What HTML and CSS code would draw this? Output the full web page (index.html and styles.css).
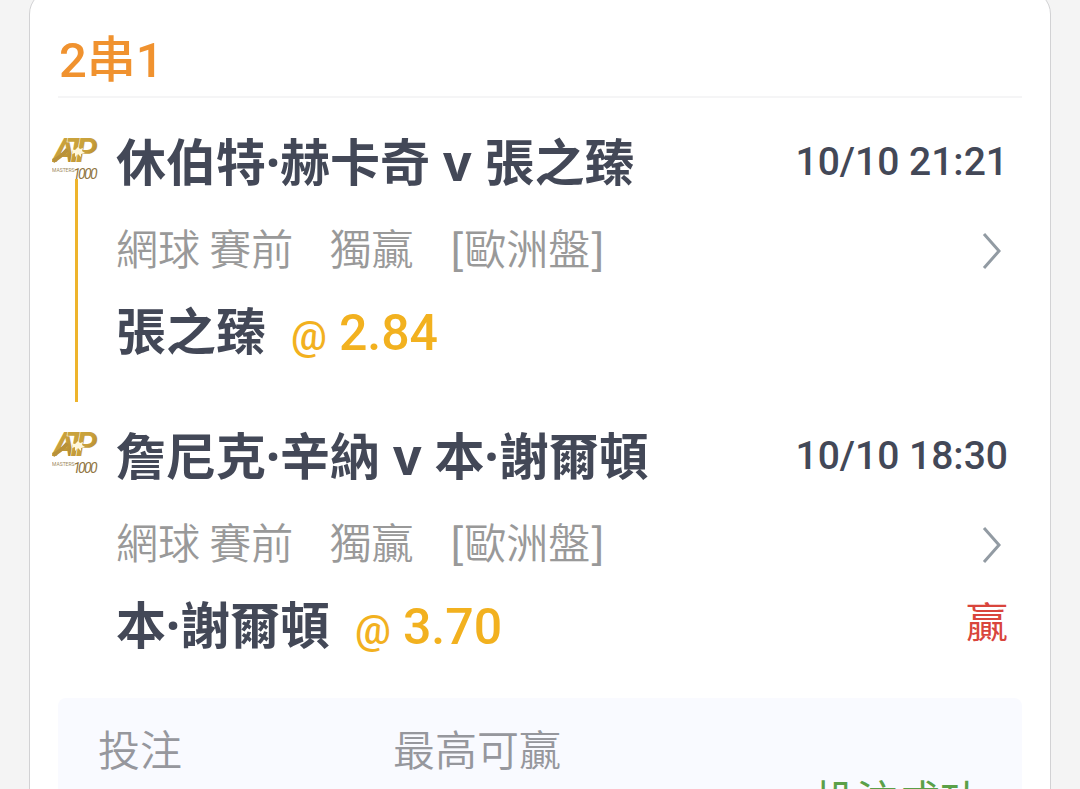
FILE: index.html
```html
<!DOCTYPE html>
<html lang="zh-Hant">

<head>
    <meta charset="UTF-8">
    <meta name="viewport" content="width=device-width, initial-scale=1.0">
    <title>2串1</title>
    <link rel="stylesheet" href="styles.css">
</head>

<body>
    <svg class="defs" width="0" height="0" aria-hidden="true">
        <defs>
            <linearGradient id="gold" x1="0" y1="0" x2="1" y2="1">
                <stop offset="0" stop-color="#c9a63c" />
                <stop offset="0.5" stop-color="#c9a03c" />
                <stop offset="1" stop-color="#a47c2a" />
            </linearGradient>
            <symbol id="atp" viewBox="0 0 46 48">
                <text class="atp-name" x="1" y="27" fill="url(#gold)">A</text>
                <text class="atp-name" x="13" y="27" fill="url(#gold)">T</text>
                <text class="atp-name" x="24" y="27" fill="url(#gold)">P</text>
                <path d="M0 24 C5 22 10 18 14 13 L17 16 C12 21 7 25 2 28 Z" fill="#b8913a" />
                <path d="M19 14 L23 15 L26 12 L28 14 L31 13 L30 16 L33 18 L29 19 L29 22 L26 19 L23 22 L23 18 L20 19 L21 16 Z" fill="#fff8dc" />
                <text class="atp-masters" x="0" y="37">MASTERS</text>
                <text class="atp-number" y="44"><tspan x="21">1</tspan><tspan x="26">0</tspan><tspan x="32">0</tspan><tspan x="38">0</tspan></text>
            </symbol>
        </defs>
    </svg>

    <main class="bet-card">
        <h1 class="bet-type">2串1</h1>

        <section class="leg">
            <div class="leg-side">
                <svg class="leg-logo" role="img" aria-label="ATP Masters 1000"><use href="#atp" /></svg>
                <div class="leg-line"></div>
            </div>
            <div class="leg-body">
                <div class="row">
                    <h2 class="match">休伯特·赫卡奇 v 張之臻</h2>
                    <time class="match-time">10/10 21:21</time>
                </div>
                <div class="row row-market">
                    <p class="market"><span>網球 賽前</span><span>獨贏</span><span><b>[</b>歐洲盤<b>]</b></span></p>
                    <button class="more" type="button" aria-label="詳情">
                        <svg viewBox="0 0 20 38" width="20" height="38">
                            <path d="M2 2 L17 19 L2 36" />
                        </svg>
                    </button>
                </div>
                <div class="row">
                    <p class="pick">張之臻 <span class="odds"><span class="at">@</span>2.84</span></p>
                </div>
            </div>
        </section>

        <section class="leg">
            <div class="leg-side">
                <svg class="leg-logo" role="img" aria-label="ATP Masters 1000"><use href="#atp" /></svg>
            </div>
            <div class="leg-body">
                <div class="row">
                    <h2 class="match">詹尼克·辛納 v 本·謝爾頓</h2>
                    <time class="match-time">10/10 18:30</time>
                </div>
                <div class="row row-market">
                    <p class="market"><span>網球 賽前</span><span>獨贏</span><span><b>[</b>歐洲盤<b>]</b></span></p>
                    <button class="more" type="button" aria-label="詳情">
                        <svg viewBox="0 0 20 38" width="20" height="38">
                            <path d="M2 2 L17 19 L2 36" />
                        </svg>
                    </button>
                </div>
                <div class="row">
                    <p class="pick">本·謝爾頓 <span class="odds"><span class="at">@</span>3.70</span></p>
                    <span class="result">贏</span>
                </div>
            </div>
        </section>

        <section class="summary">
            <span class="summary-label">投注</span>
            <span class="summary-label">最高可贏</span>
            <span class="summary-status">投注成功</span>
        </section>
    </main>
</body>

</html>
```
FILE: styles.css
```css
* {
    box-sizing: border-box;
}

body {
    margin: 0;
    height: 100vh;
    overflow: hidden;
    background-color: #f4f4f4;
    color: #434857;
    font-family: Roboto, "Noto Sans CJK TC", sans-serif;
}

h1,
h2,
p {
    margin: 0;
}

.defs {
    position: absolute;
}

.bet-card {
    margin: -10px 29px 0;
    padding: 40px 0 28px;
    background-color: #fff;
    border: 1px solid #d2d2d4;
    border-radius: 24px;
}

.bet-type {
    margin: 0 28px 34px;
    padding: 0 1px 5px;
    border-bottom: 2px solid #f5f5f6;
    color: #f0922f;
    font-size: 49px;
    font-weight: 500;
    line-height: 60px;
}

.leg {
    display: flex;
    padding: 0 42px 0 22px;
    margin-bottom: 62px;
}

.leg:nth-of-type(2) {
    margin-bottom: 40px;
}

.leg-side {
    display: flex;
    flex-direction: column;
    align-items: center;
    width: 46px;
    margin-right: 18px;
}

.leg-logo {
    width: 46px;
    height: 54px;
}

.leg-line {
    flex: 1;
    width: 3px;
    margin: -7px 0 -38px 2px;
    background-color: #eeb42c;
}

.atp-name {
    font-family: Roboto, sans-serif;
    font-size: 34px;
    font-style: italic;
    font-weight: bold;
    stroke: #fff;
    stroke-width: 1px;
    paint-order: stroke;
}

.atp-masters {
    fill: #a08a5c;
    font-family: Roboto, sans-serif;
    font-size: 5px;
}

.atp-number {
    fill: #8f7440;
    font-family: Roboto, sans-serif;
    font-size: 14px;
    font-style: italic;
}

.leg-body {
    flex: 1;
    display: grid;
    gap: 26px;
}

.row {
    display: flex;
    align-items: center;
    justify-content: space-between;
    height: 60px;
    line-height: 60px;
    white-space: nowrap;
}

.row-market {
    padding-top: 6px;
}

.match,
.pick {
    font-family: "Noto Sans", "Noto Sans CJK TC", sans-serif;
    font-size: 50px;
    font-weight: bold;
}

.match-time {
    font-size: 39px;
    font-weight: 500;
}

.market {
    display: flex;
    gap: 36px;
    padding-bottom: 8px;
    color: #999;
    font-family: "Noto Sans CJK TC", sans-serif;
    font-size: 42px;
    font-weight: 350;
}

.market b {
    font-weight: 500;
}

.more {
    display: flex;
    padding: 0 6px;
    border: none;
    background: none;
    cursor: pointer;
}

.more path {
    fill: none;
    stroke: #929ba3;
    stroke-width: 3;
}

.odds {
    margin-left: 12px;
    color: #f2b11f;
    font-family: Roboto, sans-serif;
    font-size: 50px;
    font-weight: 500;
}

.at {
    margin-right: 12px;
    font-size: 40px;
}

.result {
    padding-bottom: 8px;
    color: #d9453c;
    font-size: 42px;
}

.summary {
    display: grid;
    grid-template-columns: 295px 1fr auto;
    margin: 0 28px;
    padding: 24px 40px 40px;
    border-radius: 8px;
    background-color: #f9faff;
    font-size: 42px;
    line-height: 60px;
}

.summary-label {
    color: #96979d;
    font-weight: 350;
}

.summary-status {
    margin-top: 50px;
    color: #5ba048;
}
```
